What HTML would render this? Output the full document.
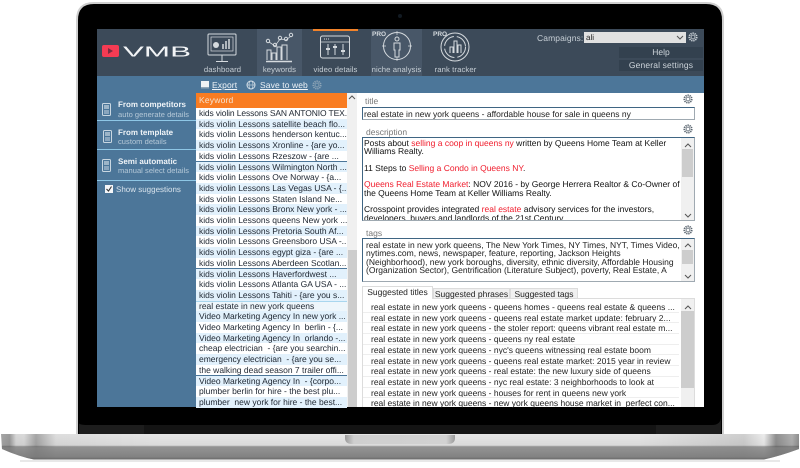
<!DOCTYPE html>
<html><head><meta charset="utf-8"><style>
html,body{margin:0;padding:0;background:#fff}
#p{position:relative;width:800px;height:468px;overflow:hidden;background:#fff;font-family:"Liberation Sans",sans-serif;font-size:8.5px;color:#222;text-rendering:geometricPrecision}
#p div,#p span.a,#p svg{position:absolute}
.t{white-space:pre;line-height:11px}
.r{left:196px;width:151px;height:10.7px;line-height:10.7px;white-space:pre;padding-left:3px;box-sizing:border-box;font-size:8.5px;color:#1d2530;overflow:hidden}
.r.e{background:#e2f1fc}.r.o{background:#fff}
.s{left:363px;width:316px;height:10.7px;line-height:10.7px;white-space:pre;padding-left:8px;border-bottom:1px solid #eee;box-sizing:border-box;color:#222;overflow:hidden}
.nav{top:65px;width:61px;text-align:center;color:#c6ced5;font-size:7.7px;line-height:10px;letter-spacing:.1px}
.lb{color:#777;font-size:8.5px;line-height:10px}
.box{left:362px;width:333px;box-sizing:border-box;background:#fff;border:1px solid #9fa9b1;border-top:1px solid #3f6583;border-left:1px solid #3f6583}
.red{color:#f01c2c}
.si{left:118px;color:#eef3f7;font-weight:bold;font-size:8px;line-height:9px}
.ss{left:118px;color:#b6c9d8;font-size:7.5px;line-height:9px;letter-spacing:.05px}
.tab{line-height:10px;text-align:center;white-space:pre;color:#222;box-sizing:border-box;border:1px solid #dcdcdc}
</style></head><body><div id="p">

<svg width="800" height="468" style="left:0;top:0">
<defs>
<linearGradient id="h" x1="0" x2="1" y1="0" y2="0">
<stop offset="0" stop-color="#a8a8a8"/><stop offset=".012" stop-color="#9a9a9a"/><stop offset=".02" stop-color="#d8d8d8"/><stop offset=".03" stop-color="#dadada"/><stop offset=".045" stop-color="#a6a6a6"/><stop offset=".07" stop-color="#dedede"/><stop offset=".2" stop-color="#e6e6e6"/><stop offset=".8" stop-color="#e6e6e6"/><stop offset=".93" stop-color="#cfcfcf"/><stop offset=".955" stop-color="#ececec"/><stop offset=".97" stop-color="#909090"/><stop offset=".99" stop-color="#b0b0b0"/><stop offset="1" stop-color="#8a8a8a"/>
</linearGradient>
<linearGradient id="v" x1="0" x2="0" y1="0" y2="1">
<stop offset="0" stop-color="#000" stop-opacity="0"/><stop offset=".42" stop-color="#000" stop-opacity=".05"/><stop offset=".5" stop-color="#777" stop-opacity=".75"/><stop offset=".85" stop-color="#777" stop-opacity=".9"/><stop offset="1" stop-color="#555"/>
</linearGradient>
<linearGradient id="n" x1="0" x2="1" y1="0" y2="0">
<stop offset="0" stop-color="#9a9a9a"/><stop offset=".08" stop-color="#cfcfcf"/><stop offset=".92" stop-color="#d2d2d2"/><stop offset="1" stop-color="#9a9a9a"/>
</linearGradient>
<clipPath id="base"><path d="M1 434H799V449Q780 456 764 459.500H34Q20 457 2 449Z"/></clipPath>
<g id="gear" fill="none" stroke="#5b6670">
<circle cx="5" cy="5" r="3.700" stroke-width="1.800" stroke-dasharray="1.300 .8"/><circle cx="5" cy="5" r="1.900" stroke-width=".8"/>
</g>
<g id="gearL" fill="none" stroke="#c9d0d6">
<circle cx="5" cy="5" r="3.700" stroke-width="1.800" stroke-dasharray="1.300 .8"/><circle cx="5" cy="5" r="1.900" stroke-width=".8"/>
</g>
<g id="gearB" fill="none" stroke="#8da4b6">
<circle cx="5" cy="5" r="3.700" stroke-width="1.800" stroke-dasharray="1.300 .8"/><circle cx="5" cy="5" r="1.900" stroke-width=".8"/>
</g>
<g id="doc" fill="none" stroke="#c9d7e2" stroke-width="1">
<rect x=".5" y=".5" width="8" height="12" rx="1"/><rect x="2" y="2" width="5" height="4" fill="#9db5c8" stroke="none"/><path d="M2 8h5M2 10h5"/>
</g>
</defs>
<!-- lid -->
<path d="M76 434V20Q76 2 94 2H706Q724 2 724 20V434Z" fill="#cfcfcf"/>
<path d="M78 434V20Q78 4 94 4H706Q722 4 722 20V434Z" fill="#000"/>
<path d="M79 423Q79 425 88 425H712Q720 425 721 418V434H79Z" fill="#1d1d1d"/>
<rect x="144" y="425" width="512" height="9" fill="#141414"/>
<circle cx="400" cy="16" r="2" fill="#121a22"/>
<!-- shadow -->
<rect x="20" y="460" width="760" height="2" fill="#e8e8e8"/>
<!-- base -->
<g clip-path="url(#base)"><rect x="0" y="434" width="800" height="27" fill="url(#h)"/><rect x="0" y="434" width="800" height="27" fill="url(#v)"/></g>
<path d="M345 435H455V438Q455 444 448 444H352Q345 444 345 438Z" fill="url(#n)"/>
</svg>

<!-- screen -->
<div style="left:97px;top:29px;width:607px;height:378px;background:#4c7699"></div>
<div style="left:97px;top:29px;width:607px;height:47px;background:#3c4a59"></div>
<div style="left:257px;top:29px;width:45px;height:47px;background:#485768"></div>
<div style="left:371px;top:29px;width:51px;height:47px;background:#485768"></div>
<div style="left:313px;top:29px;width:45px;height:2px;background:#f2832a"></div>

<!-- logo -->
<svg width="100" height="20" style="left:97px;top:41px">
<rect x="5" y="4" width="17" height="12" rx="2" fill="#f53b53"/><path d="M11 7l5 3-5 3z" fill="#7e2a40"/>
<text x="26" y="15.500" font-family="Liberation Sans" font-size="14.500" fill="#f2f4f6" textLength="68" lengthAdjust="spacingAndGlyphs">VMB</text>
</svg>

<!-- nav icons -->
<svg width="300" height="36" style="left:200px;top:30px" fill="none" stroke="#d5dade" stroke-width="1">
<!-- dashboard -->
<rect x="8" y="4" width="28" height="21" rx="1" />
<rect x="11" y="7" width="22" height="14" stroke-width=".7"/>
<circle cx="16" cy="15" r="3" fill="#d5dade" stroke="none"/>
<path d="M23 19v-5M26 19v-8M29 19v-10" stroke-width="1.500"/>
<path d="M22 25v6M16 31.500h12"/>
<!-- keywords -->
<path d="M66 31.500h26" stroke-width="1.500"/>
<path d="M67 30V20h4v10M72 30V23h4v7M77 30V17h4v13M82 30V15h5v15"/>
<path d="M69 12l6 4 5-7 6 1 5-4" stroke-width=".8"/>
<circle cx="68" cy="11" r="1.700"/><circle cx="75" cy="15" r="1.700"/><circle cx="80" cy="8" r="1.700"/><circle cx="86" cy="9" r="1.700"/><circle cx="91" cy="5" r="1.700"/>
<!-- video details -->
<rect x="120.500" y="6" width="29" height="22" rx="2"/>
<path d="M121 12h29" stroke-width=".8"/><path d="M124 9h5" stroke-dasharray="1 1"/>
<path d="M128 14v11M135 14v11M143 14v11"/>
<path d="M126 19h4M133 17h4M141 21h4" stroke-width="2"/>
<!-- niche -->
<circle cx="197" cy="16" r="13.500"/>
<path d="M197 1v4M197 27v4M182 16h4M208 16h4" stroke-width=".7"/>
<circle cx="197" cy="9" r="2"/>
<path d="M194 13h6v7h-1v7h-4v-7h-1z"/>
<!-- rank -->
<circle cx="255" cy="17" r="14"/><circle cx="255" cy="17" r="10.500" stroke-dasharray="14 3"/>
<path d="M250 23v-6h3v6M254 23V11h3v12M258 23v-8h3v8"/>
</svg>
<div class="t" style="left:372px;top:29px;color:#d5dade;font-weight:bold;font-size:6.500px">PRO</div>
<div class="t" style="left:433px;top:29px;color:#d5dade;font-weight:bold;font-size:6.500px">PRO</div>

<div class="nav" style="left:192px">dashboard</div>
<div class="nav" style="left:249px">keywords</div>
<div class="nav" style="left:305px">video details</div>
<div class="nav" style="left:366px">niche analysis</div>
<div class="nav" style="left:425px">rank tracker</div>

<!-- campaigns -->
<div class="t" style="left:537px;top:33px;color:#c6ced5;letter-spacing:.1px">Campaigns:</div>
<div style="left:584px;top:32px;width:102px;height:11px;background:#e1e1e1;font-size:8px;line-height:11px;color:#222;text-indent:2px">ali</div>
<svg width="8" height="6" style="left:676px;top:35px"><path d="M1 1l3 3 3-3" fill="none" stroke="#555"/></svg>
<svg width="10" height="10" style="left:688px;top:32px"><use href="#gearL"/></svg>
<div style="left:619px;top:47px;width:84px;height:11px;background:#33414f;color:#cdd4da;text-align:center;line-height:11px">Help</div>
<div style="left:619px;top:60px;width:84px;height:11px;background:#33414f;color:#cdd4da;text-align:center;line-height:11px;letter-spacing:.15px">General settings</div>

<!-- toolbar -->
<svg width="9" height="8" style="left:201px;top:81px"><rect x="0" y="0" width="8" height="7" fill="#eef2f5"/><rect x="0" y="6" width="8" height="1.500" fill="#8fa6b8"/></svg>
<div class="t" style="left:212px;top:80px;color:#eef3f7;text-decoration:underline;letter-spacing:.1px">Export</div>
<svg width="10" height="10" style="left:246px;top:80px" fill="none" stroke="#d5e0e8"><circle cx="5" cy="5" r="4"/><ellipse cx="5" cy="5" rx="2" ry="4" stroke-width=".6"/><path d="M1 5h8" stroke-width=".6"/></svg>
<div class="t" style="left:260px;top:80px;color:#eef3f7;text-decoration:underline;letter-spacing:.1px">Save to web</div>
<svg width="10" height="10" style="left:312px;top:80px"><use href="#gearB"/></svg>

<!-- sidebar -->
<svg width="10" height="14" style="left:102px;top:103px"><use href="#doc"/></svg>
<svg width="10" height="14" style="left:103px;top:130px"><use href="#doc"/></svg>
<svg width="10" height="14" style="left:102px;top:159px"><use href="#doc"/></svg>
<div class="t si" style="top:100px">From competitors</div>
<div class="t ss" style="top:110px">auto generate details</div>
<div style="left:97px;top:120px;width:99px;height:1px;background:#8ec7e6"></div>
<div class="t si" style="top:128px">From template</div>
<div class="t ss" style="top:137px">custom details</div>
<div style="left:97px;top:149px;width:99px;height:1px;background:#8ec7e6"></div>
<div class="t si" style="top:157px">Semi automatic</div>
<div class="t ss" style="top:166px">manual select details</div>
<div style="left:97px;top:180px;width:99px;height:1px;background:#8ec7e6"></div>
<svg width="8" height="8" style="left:105px;top:185px"><rect width="8" height="8" fill="#f4f6f8"/><path d="M1.500 4l2 2 3-4.500" fill="none" stroke="#333" stroke-width="1.100"/></svg>
<div class="t" style="left:116px;top:184px;color:#d8e3ec;font-size:8px">Show suggestions</div>

<!-- keyword list -->
<div style="left:196px;top:93px;width:151px;height:15px;background:#f97c21;color:#f5e2d0;line-height:14px;text-indent:3px;letter-spacing:.2px">Keyword</div>
<div style="left:347px;top:93px;width:10px;height:314px;background:#f0f0f0"></div>
<div style="left:348px;top:250px;width:9px;height:157px;background:#cdcdcd"></div>
<svg width="8" height="6" style="left:348px;top:95px"><path d="M1 4l3-3 3 3" fill="none" stroke="#555"/></svg>

<div class="r o" style="top:108px;letter-spacing:-.12px">kids violin Lessons SAN ANTONIO TEX...</div>
<div class="r e" style="top:118.700px">kids violin Lessons satellite beach flo...</div>
<div class="r o" style="top:129.400px">kids violin Lessons henderson kentuc...</div>
<div class="r e" style="top:140.100px">kids violin Lessons Xronline - {are yo...</div>
<div class="r o" style="top:150.800px">kids violin Lessons Rzeszow - {are ...</div>
<div class="r e" style="top:161.500px">kids violin Lessons Wilmington North ...</div>
<div class="r o" style="top:172.200px">kids violin Lessons Ove Norway - {a...</div>
<div class="r e" style="top:182.900px">kids violin Lessons Las Vegas USA - {...</div>
<div class="r o" style="top:193.600px">kids violin Lessons Staten Island Ne...</div>
<div class="r e" style="top:204.300px">kids violin Lessons Bronx New york - ...</div>
<div class="r o" style="top:215px">kids violin Lessons queens New york ...</div>
<div class="r e" style="top:225.700px">kids violin Lessons Pretoria South Af...</div>
<div class="r o" style="top:236.400px">kids violin Lessons Greensboro USA -...</div>
<div class="r e" style="top:247.100px">kids violin Lessons egypt giza - {are ...</div>
<div class="r o" style="top:257.800px">kids violin Lessons Aberdeen Scotlan...</div>
<div class="r e" style="top:268.500px">kids violin Lessons Haverfordwest ...</div>
<div class="r o" style="top:279.200px">kids violin Lessons Atlanta GA USA - ...</div>
<div class="r e" style="top:289.900px">kids violin Lessons Tahiti - {are you s...</div>
<div class="r o" style="top:300.600px;background:#eef6fb;border-top:1px solid #a9d6ee;line-height:9.700px">real estate in new york queens</div>
<div class="r e" style="top:311.300px">Video Marketing Agency In new york ...</div>
<div class="r o" style="top:322px">Video Marketing Agency In  berlin - {...</div>
<div class="r e" style="top:332.700px">Video Marketing Agency In  orlando -...</div>
<div class="r o" style="top:343.400px">cheap electrician  - {are you searchin...</div>
<div class="r e" style="top:354.100px">emergency electrician  - {are you se...</div>
<div class="r o" style="top:364.800px">the walking dead season 7 trailer offi...</div>
<div class="r e" style="top:375.500px">Video Marketing Agency In  - {corpo...</div>
<div class="r o" style="top:386.200px">plumber berlin for hire - the best plu...</div>
<div class="r e" style="top:396.900px">plumber  new york for hire - the best...</div>

<!-- right pane -->
<div style="left:357px;top:93px;width:347px;height:314px;background:#fff"></div>
<div class="lb" style="left:365px;top:96px">title</div>
<svg width="10" height="10" style="left:683px;top:94px"><use href="#gear"/></svg>
<div class="box" style="top:107px;height:13px;font-size:8.5px;line-height:12px;padding-left:1px;white-space:pre">real estate in new york queens - affordable house for sale in queens ny</div>

<div class="lb" style="left:366px;top:127px">description</div>
<svg width="10" height="10" style="left:683px;top:124px"><use href="#gear"/></svg>
<div class="box" style="top:137px;height:84px;overflow:hidden;padding-left:1px;line-height:8.300px;font-size:8.5px;color:#111">
<div class="t" style="left:1px;top:1px;line-height:8.300px">Posts about <span class="red">selling a coop in queens ny</span> written by Queens Home Team at Keller
Williams Realty.

11 Steps to <span class="red">Selling a Condo in Queens NY</span>.

<span class="red">Queens Real Estate Market</span>: NOV 2016 - by George Herrera Realtor &amp; Co-Owner of
the Queens Home Team at Keller Williams Realty.

Crosspoint provides integrated <span class="red">real estate</span> advisory services for the investors,
developers, buyers and landlords of the 21st Century.</div>
<div style="left:318px;top:0;width:13px;height:83px;background:#f0f0f0"></div>
<div style="left:319px;top:11px;width:11px;height:28px;background:#cdcdcd"></div>
<svg width="8" height="6" style="left:321px;top:5px"><path d="M1 4l3-3 3 3" fill="none" stroke="#555"/></svg>
<svg width="8" height="6" style="left:321px;top:75px"><path d="M1 1l3 3 3-3" fill="none" stroke="#555"/></svg>
</div>

<div class="lb" style="left:366px;top:228px">tags</div>
<svg width="10" height="10" style="left:683px;top:225px"><use href="#gear"/></svg>
<div class="box" style="top:238px;height:44px;overflow:hidden">
<div class="t" style="left:3px;top:2px;line-height:8.300px;color:#222;font-size:8.5px">real estate in new york queens, The New York Times, NY Times, NYT, Times Video,
nytimes.com, news, newspaper, feature, reporting, Jackson Heights
(Neighborhood), new york boroughs, diversity, ethnic diversity, Affordable Housing
(Organization Sector), Gentrification (Literature Subject), poverty, Real Estate, A</div>
<div style="left:318px;top:0;width:13px;height:43px;background:#f0f0f0"></div>
<div style="left:319px;top:11px;width:11px;height:14px;background:#cdcdcd"></div>
<svg width="8" height="6" style="left:321px;top:4px"><path d="M1 4l3-3 3 3" fill="none" stroke="#555"/></svg>
<svg width="8" height="6" style="left:321px;top:35px"><path d="M1 1l3 3 3-3" fill="none" stroke="#555"/></svg>
</div>

<!-- tabs -->
<div style="left:362px;top:298px;width:333px;height:109px;background:#fff;border:1px solid #dcdcdc;border-bottom:0;box-sizing:border-box"></div>
<div class="tab" style="left:433px;top:288px;width:77px;height:11px;background:#f0f0f0">Suggested phrases</div>
<div class="tab" style="left:510px;top:288px;width:68px;height:11px;background:#f0f0f0">Suggested tags</div>
<div class="tab" style="left:362px;top:286px;width:71px;height:13px;background:#fff;border-bottom:0;line-height:11px">Suggested titles</div>

<div class="s" style="top:302px">real estate in new york queens - queens homes - queens real estate &amp; queens ...</div>
<div class="s" style="top:312.700px">real estate in new york queens - queens real estate market update: february 2...</div>
<div class="s" style="top:323.400px">real estate in new york queens - the stoler report: queens vibrant real estate m...</div>
<div class="s" style="top:334.100px">real estate in new york queens - queens ny real estate</div>
<div class="s" style="top:344.800px">real estate in new york queens - nyc's queens witnessing real estate boom</div>
<div class="s" style="top:355.500px">real estate in new york queens - queens real estate market: 2015 year in review</div>
<div class="s" style="top:366.200px">real estate in new york queens - real estate: the new luxury side of queens</div>
<div class="s" style="top:376.900px">real estate in new york queens - nyc real estate: 3 neighborhoods to look at</div>
<div class="s" style="top:387.600px">real estate in new york queens - houses for rent in queens new york</div>
<div class="s" style="top:398.300px;border:0">real estate in new york queens - new york queens house market in  perfect con...</div>
<div style="left:681px;top:299px;width:13px;height:108px;background:#f0f0f0"></div>
<div style="left:681px;top:311px;width:13px;height:77px;background:#cdcdcd"></div>
<svg width="8" height="6" style="left:684px;top:305px"><path d="M1 4l3-3 3 3" fill="none" stroke="#555"/></svg>

</div></body></html>
